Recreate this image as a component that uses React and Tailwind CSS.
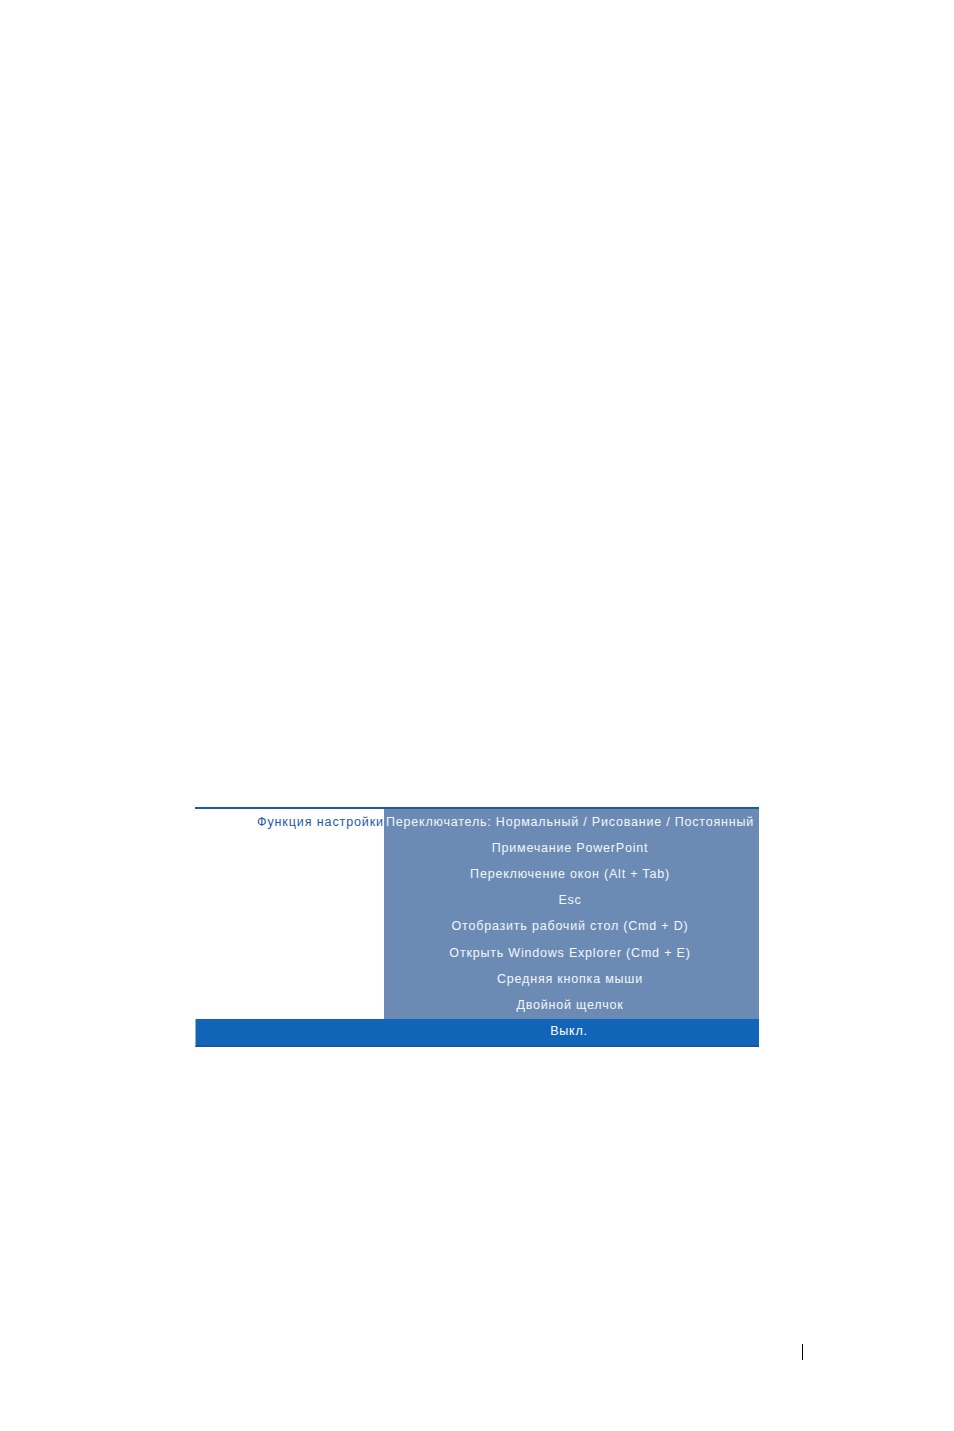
const OPTIONS = [
  'Переключатель: Нормальный / Рисование / Постоянный',
  'Примечание PowerPoint',
  'Переключение окон (Alt + Tab)',
  'Esc',
  'Отобразить рабочий стол (Cmd + D)',
  'Открыть Windows Explorer (Cmd + E)',
  'Средняя кнопка мыши',
  'Двойной щелчок',
];

export default function App() {
  return (
    <div className="min-h-[1431px] w-[954px] bg-white font-['Liberation_Sans',Arial,sans-serif] text-[12.5px] tracking-[0.8px]">
      <div className="pt-[807px] pl-[195px]">
        <div className="w-[564px] border-t-2 border-[#1d59a5]">
          <div className="flex">
            <div className="w-[189px] pt-[4px] text-right text-[#1d59a5] leading-[18px] tracking-[0.9px] whitespace-nowrap">Функция настройки</div>
            <div className="flex-1 bg-[#6b8bb5] text-[#f4f7fb] pr-[3px]">
              {OPTIONS.map((opt) => (
                <div key={opt} className="h-[26.2px] flex items-center justify-center whitespace-nowrap">
                  {opt}
                </div>
              ))}
            </div>
          </div>
          <div className="flex h-[28px] bg-[#1164b8] border-b-2 border-[#1a55a0] border-l border-l-[#8fb0d8] text-white">
            <div className="w-[188px]" />
            <div className="flex-1 flex items-center justify-center pr-[5px]">Выкл.</div>
          </div>
        </div>
      </div>
      <div className="mt-[297px] ml-[802px] w-px h-[16px] bg-black" />
    </div>
  );
}
